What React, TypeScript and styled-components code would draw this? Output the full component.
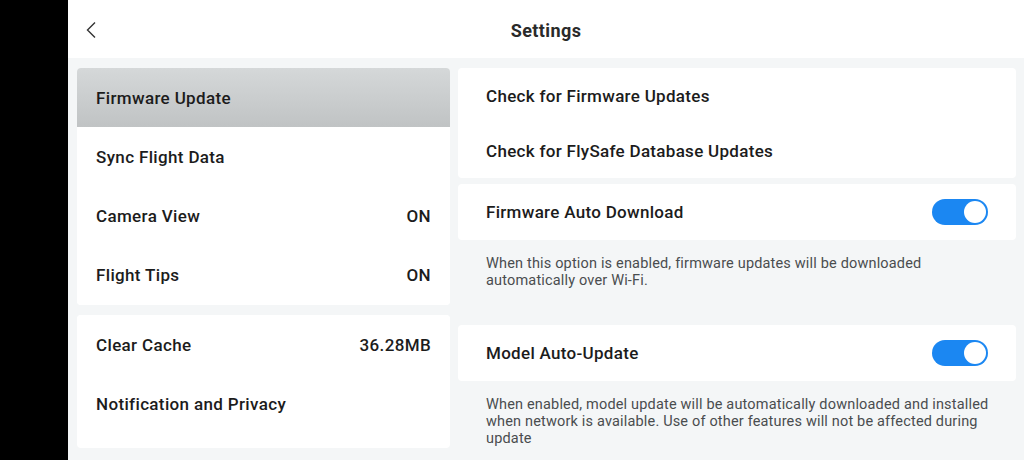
import React from "react";
import styled, { createGlobalStyle } from "styled-components";

const GlobalStyle = createGlobalStyle`
  html, body {
    margin: 0;
    padding: 0;
    background: #000;
  }
  body {
    font-family: Roboto, "Noto Sans", "Liberation Sans", sans-serif;
    -webkit-font-smoothing: antialiased;
  }
`;

interface MenuItem {
  label: string;
  value?: string;
  selected?: boolean;
}

const menuGroups: MenuItem[][] = [
  [
    { label: "Firmware Update", selected: true },
    { label: "Sync Flight Data" },
    { label: "Camera View", value: "ON" },
    { label: "Flight Tips", value: "ON" },
  ],
  [{ label: "Clear Cache", value: "36.28MB" }, { label: "Notification and Privacy" }],
];

const Toggle: React.FC<{ on?: boolean }> = ({ on = true }) => (
  <ToggleTrack $on={on}>
    <ToggleKnob />
  </ToggleTrack>
);

const App: React.FC = () => {
  return (
    <>
      <GlobalStyle />
      <Screen>
        <Bezel />
        <Main>
          <Header>
            <BackButton>
              <svg width="12" height="18" viewBox="0 0 12 18" fill="none">
                <polyline points="10,1.5 2.5,9 10,16.5" stroke="#333" strokeWidth="1.4" />
              </svg>
            </BackButton>
            <Title>Settings</Title>
          </Header>
          <Content>
            <LeftCol>
              {menuGroups.map((group, gi) => (
                <MenuCard key={gi} $last={gi === menuGroups.length - 1}>
                  {group.map((item) => (
                    <MenuRow key={item.label} $selected={!!item.selected}>
                      <span>{item.label}</span>
                      {item.value && <span>{item.value}</span>}
                    </MenuRow>
                  ))}
                </MenuCard>
              ))}
            </LeftCol>
            <RightCol>
              <Card>
                <LinkRow>Check for Firmware Updates</LinkRow>
                <LinkRow>Check for FlySafe Database Updates</LinkRow>
              </Card>
              <Card>
                <SwitchRow>
                  <span>Firmware Auto Download</span>
                  <Toggle />
                </SwitchRow>
              </Card>
              <Note>
                When this option is enabled, firmware updates will be downloaded automatically over
                Wi-Fi.
              </Note>
              <Card>
                <SwitchRow>
                  <span>Model Auto-Update</span>
                  <Toggle />
                </SwitchRow>
              </Card>
              <Note>
                When enabled, model update will be automatically downloaded and installed when network
                is available. Use of other features will not be affected during update
              </Note>
            </RightCol>
          </Content>
        </Main>
      </Screen>
    </>
  );
};

export default App;

// Styled Components
const Screen = styled.div`
  width: 1024px;
  height: 460px;
  display: flex;
  overflow: hidden;
`;

const Bezel = styled.div`
  width: 68px;
  flex-shrink: 0;
  background: #000;
`;

const Main = styled.div`
  flex: 1;
  display: flex;
  flex-direction: column;
  background: #fff;
  min-width: 0;
`;

const Header = styled.div`
  height: 58px;
  flex-shrink: 0;
  position: relative;
  display: flex;
  align-items: center;
  justify-content: center;
  background: #fff;
`;

const BackButton = styled.div`
  position: absolute;
  left: 17px;
  top: 21px;
  display: flex;
`;

const Title = styled.div`
  font-size: 18px;
  font-weight: 700;
  letter-spacing: 0.4px;
  color: #2a2a2a;
  margin-top: 2px;
`;

const Content = styled.div`
  flex: 1;
  display: flex;
  gap: 8px;
  padding: 10px 8px 0 9px;
  background: #f4f6f7;
  overflow: hidden;
`;

const LeftCol = styled.div`
  width: 373px;
  flex-shrink: 0;
  display: flex;
  flex-direction: column;
  gap: 10px;
`;

const MenuCard = styled.div<{ $last: boolean }>`
  background: #fff;
  border-radius: 4px;
  overflow: hidden;
  padding-bottom: ${({ $last }) => ($last ? "14px" : "0")};
`;

const MenuRow = styled.div<{ $selected: boolean }>`
  height: 59.25px;
  display: flex;
  align-items: center;
  justify-content: space-between;
  padding: 0 19px;
  font-size: 17px;
  font-weight: 500;
  letter-spacing: 0.35px;
  color: #1c1c1c;
  background: ${({ $selected }) =>
    $selected ? "linear-gradient(180deg, #d5d8d9 0%, #c0c3c4 100%)" : "#fff"};
`;

const RightCol = styled.div`
  flex: 1;
  display: flex;
  flex-direction: column;
  gap: 6px;
  min-width: 0;
`;

const Card = styled.div`
  background: #fff;
  border-radius: 4px;
  padding: 0 28px;
`;

const LinkRow = styled.div`
  height: 55px;
  display: flex;
  align-items: center;
  font-size: 17px;
  font-weight: 500;
  letter-spacing: 0.3px;
  color: #1c1c1c;
`;

const SwitchRow = styled(LinkRow)`
  height: 56px;
  justify-content: space-between;
`;

const Note = styled.div`
  padding: 9px 18px 30px 28px;
  font-size: 14.5px;
  line-height: 17px;
  letter-spacing: 0.17px;
  color: #4a4d4f;
`;

const ToggleTrack = styled.div<{ $on: boolean }>`
  width: 56px;
  height: 26px;
  border-radius: 13px;
  background: ${({ $on }) => ($on ? "#1b87f2" : "#c8cbcd")};
  display: flex;
  align-items: center;
  justify-content: ${({ $on }) => ($on ? "flex-end" : "flex-start")};
  padding: 0 2px;
  box-sizing: border-box;
`;

const ToggleKnob = styled.div`
  width: 22px;
  height: 22px;
  border-radius: 50%;
  background: #fff;
`;
